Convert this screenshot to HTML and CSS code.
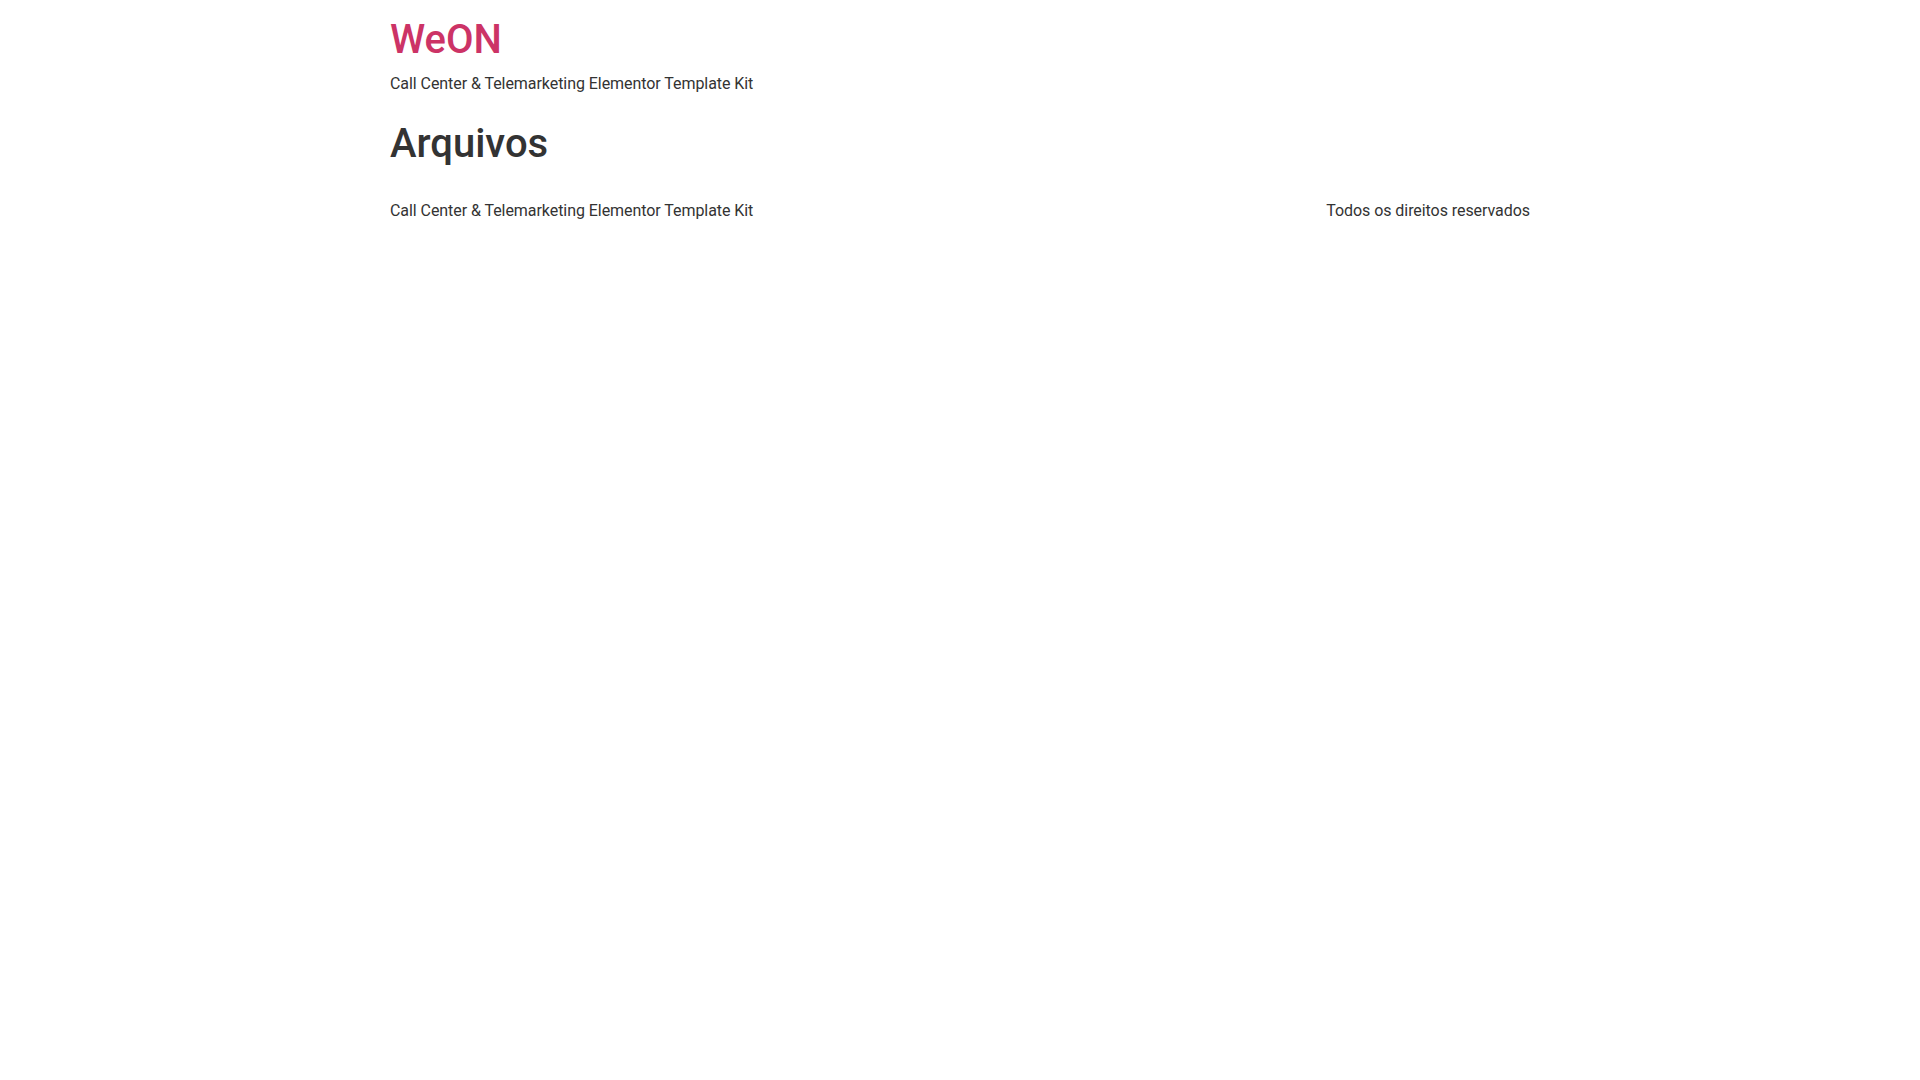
FILE: index.html
```html
<!DOCTYPE html>
<html lang="pt-BR">
<head>
<meta charset="utf-8">
<title>Arquivos – WeON</title>
<link rel="stylesheet" href="styles.css">
</head>
<body>
<header class="site-header">
  <div class="site-branding">
    <h1 class="site-title"><a href="#">WeON</a></h1>
    <p class="site-description">Call Center &amp; Telemarketing Elementor Template Kit</p>
  </div>
</header>
<main class="site-main">
  <div class="page-header">
    <h1 class="entry-title">Arquivos</h1>
  </div>
</main>
<footer class="site-footer">
  <div class="footer-branding">
    <p class="site-description">Call Center &amp; Telemarketing Elementor Template Kit</p>
  </div>
  <div class="copyright">
    <p>Todos os direitos reservados</p>
  </div>
</footer>
</body>
</html>
```
FILE: styles.css
```css
html, body {
  margin: 0;
  padding: 0;
  background: #ffffff;
}

body {
  font-family: Roboto, "Liberation Sans", Arial, sans-serif;
  font-size: 16px;
  line-height: 24px;
  color: #333333;
  letter-spacing: -0.06px;
}

.site-header,
.site-main,
.site-footer {
  width: 1140px;
  margin: 0 auto;
}

.site-header {
  padding-top: 16px;
}

.site-branding {
  display: flex;
  flex-direction: column;
}

.site-title {
  margin: 0;
  font-size: 40px;
  line-height: 48px;
  font-weight: 500;
  letter-spacing: 0;
}

.site-title a {
  color: #cc3366;
  text-decoration: none;
}

.site-description {
  margin: 8px 0 0;
}

.page-header {
  padding-top: 24px;
}

.entry-title {
  margin: 0;
  font-size: 40px;
  line-height: 48px;
  font-weight: 500;
  letter-spacing: 0;
  color: #333333;
}

.site-footer {
  display: flex;
  justify-content: space-between;
  align-items: flex-start;
  padding-top: 31px;
}

.site-footer p {
  margin: 0;
}
```
